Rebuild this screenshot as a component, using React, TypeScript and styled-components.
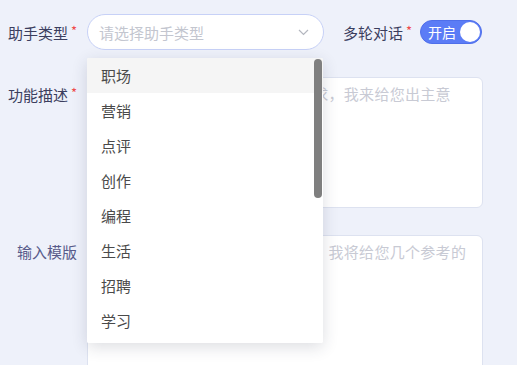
import React from 'react';
import styled, { createGlobalStyle } from 'styled-components';

const GlobalStyle = createGlobalStyle`
  html, body {
    margin: 0;
    padding: 0;
    background: #eef1fa;
    font-family: "Noto Sans CJK SC", "Noto Sans", "Liberation Sans", sans-serif;
  }
`;

const Form = styled.div`
  width: 483px;
  padding-top: 14px;
  display: flex;
  flex-direction: column;
`;

const Row = styled.div<{ $center?: boolean; $gap?: number }>`
  display: flex;
  align-items: ${(p) => (p.$center ? 'center' : 'flex-start')};
  margin-bottom: ${(p) => p.$gap ?? 0}px;
`;

const Label = styled.div<{ $muted?: boolean; $top?: number }>`
  width: 77px;
  flex-shrink: 0;
  text-align: right;
  font-size: 15px;
  line-height: 20px;
  color: ${(p) => (p.$muted ? '#585b8a' : '#3b3e5e')};
  margin-right: 10px;
  padding-top: ${(p) => p.$top ?? 0}px;
  white-space: nowrap;
`;

const Star = styled.span`
  color: #f04b4b;
  font-size: 13px;
  margin-left: 3px;
  vertical-align: 3px;
`;

const SelectWrap = styled.div`
  position: relative;
  width: 237px;
  flex-shrink: 0;
`;

const SelectBox = styled.div`
  box-sizing: border-box;
  height: 36px;
  border: 1.5px solid #c7d1f7;
  border-radius: 18px;
  background: #fff;
  display: flex;
  align-items: center;
  justify-content: space-between;
  padding: 0 14px 0 11px;
  font-size: 15px;
  color: #c3c6cf;
`;

const Dropdown = styled.div`
  position: absolute;
  top: 44px;
  left: 0;
  width: 236px;
  height: 285px;
  background: #fff;
  border-radius: 2px;
  box-shadow: 0 4px 16px rgba(40, 45, 70, 0.16);
  overflow: hidden;
  z-index: 5;
`;

const Option = styled.div<{ $active?: boolean }>`
  height: 35px;
  line-height: 35px;
  padding-left: 14px;
  font-size: 15px;
  color: #4a4a4a;
  background: ${(p) => (p.$active ? '#f5f5f5' : '#fff')};
`;

const Thumb = styled.div`
  position: absolute;
  top: 1px;
  right: 1px;
  width: 8px;
  height: 139px;
  border-radius: 4px;
  background: #7f7f7f;
`;

const InlineLabel = styled(Label)`
  width: auto;
  margin-left: 19px;
  margin-right: 8px;
`;

const Toggle = styled.div<{ $on?: boolean }>`
  box-sizing: border-box;
  width: 62px;
  height: 24px;
  border-radius: 12px;
  border: 1px solid #4f6fea;
  background: ${(p) => (p.$on ? '#5b7cf6' : '#c0c4cc')};
  display: flex;
  align-items: center;
  justify-content: space-between;
  padding: 0 1px 0 7px;
  color: #fff;
  font-size: 14px;
`;

const Knob = styled.span`
  width: 20px;
  height: 20px;
  border-radius: 50%;
  background: #fff;
`;

const TextArea = styled.div<{ $height: number }>`
  box-sizing: border-box;
  flex: 1;
  height: ${(p) => p.$height}px;
  background: #fff;
  border: 1px solid #dde2f0;
  border-radius: 6px;
  padding: 6px 11px;
  font-size: 15px;
  letter-spacing: 0.3px;
  line-height: 20px;
  color: #c8cad4;
  overflow: hidden;
`;

const options = [
  '职场', '营销', '点评', '创作', '编程', '生活', '招聘', '学习',
  '娱乐', '健康', '旅行', '美食', '情感', '教育', '科技', '其他',
];

const Chevron = () => (
  <svg width="11" height="7" viewBox="0 0 11 7" fill="none">
    <path d="M1 1l4.5 4.5L10 1" stroke="#b4b7bf" strokeWidth="1.2" />
  </svg>
);

export default function App() {
  return (
    <>
      <GlobalStyle />
      <Form>
        <Row $center $gap={27}>
          <Label>
            助手类型<Star>*</Star>
          </Label>
          <SelectWrap>
            <SelectBox>
              <span>请选择助手类型</span>
              <Chevron />
            </SelectBox>
            <Dropdown>
              {options.map((o, i) => (
                <Option key={o} $active={i === 0}>
                  {o}
                </Option>
              ))}
              <Thumb />
            </Dropdown>
          </SelectWrap>
          <InlineLabel>
            多轮对话<Star>*</Star>
          </InlineLabel>
          <Toggle $on>
            开启
            <Knob />
          </Toggle>
        </Row>
        <Row $gap={27}>
          <Label $top={6}>
            功能描述<Star>*</Star>
          </Label>
          <TextArea $height={131}>描述一下你想要的助手功能和需求，我来给您出主意</TextArea>
        </Row>
        <Row>
          <Label $muted $top={7}>
            输入模版
          </Label>
          <TextArea $height={140}>
            输入您想要生成的内容模版格式，我将给您几个参考的示例
          </TextArea>
        </Row>
      </Form>
    </>
  );
}
